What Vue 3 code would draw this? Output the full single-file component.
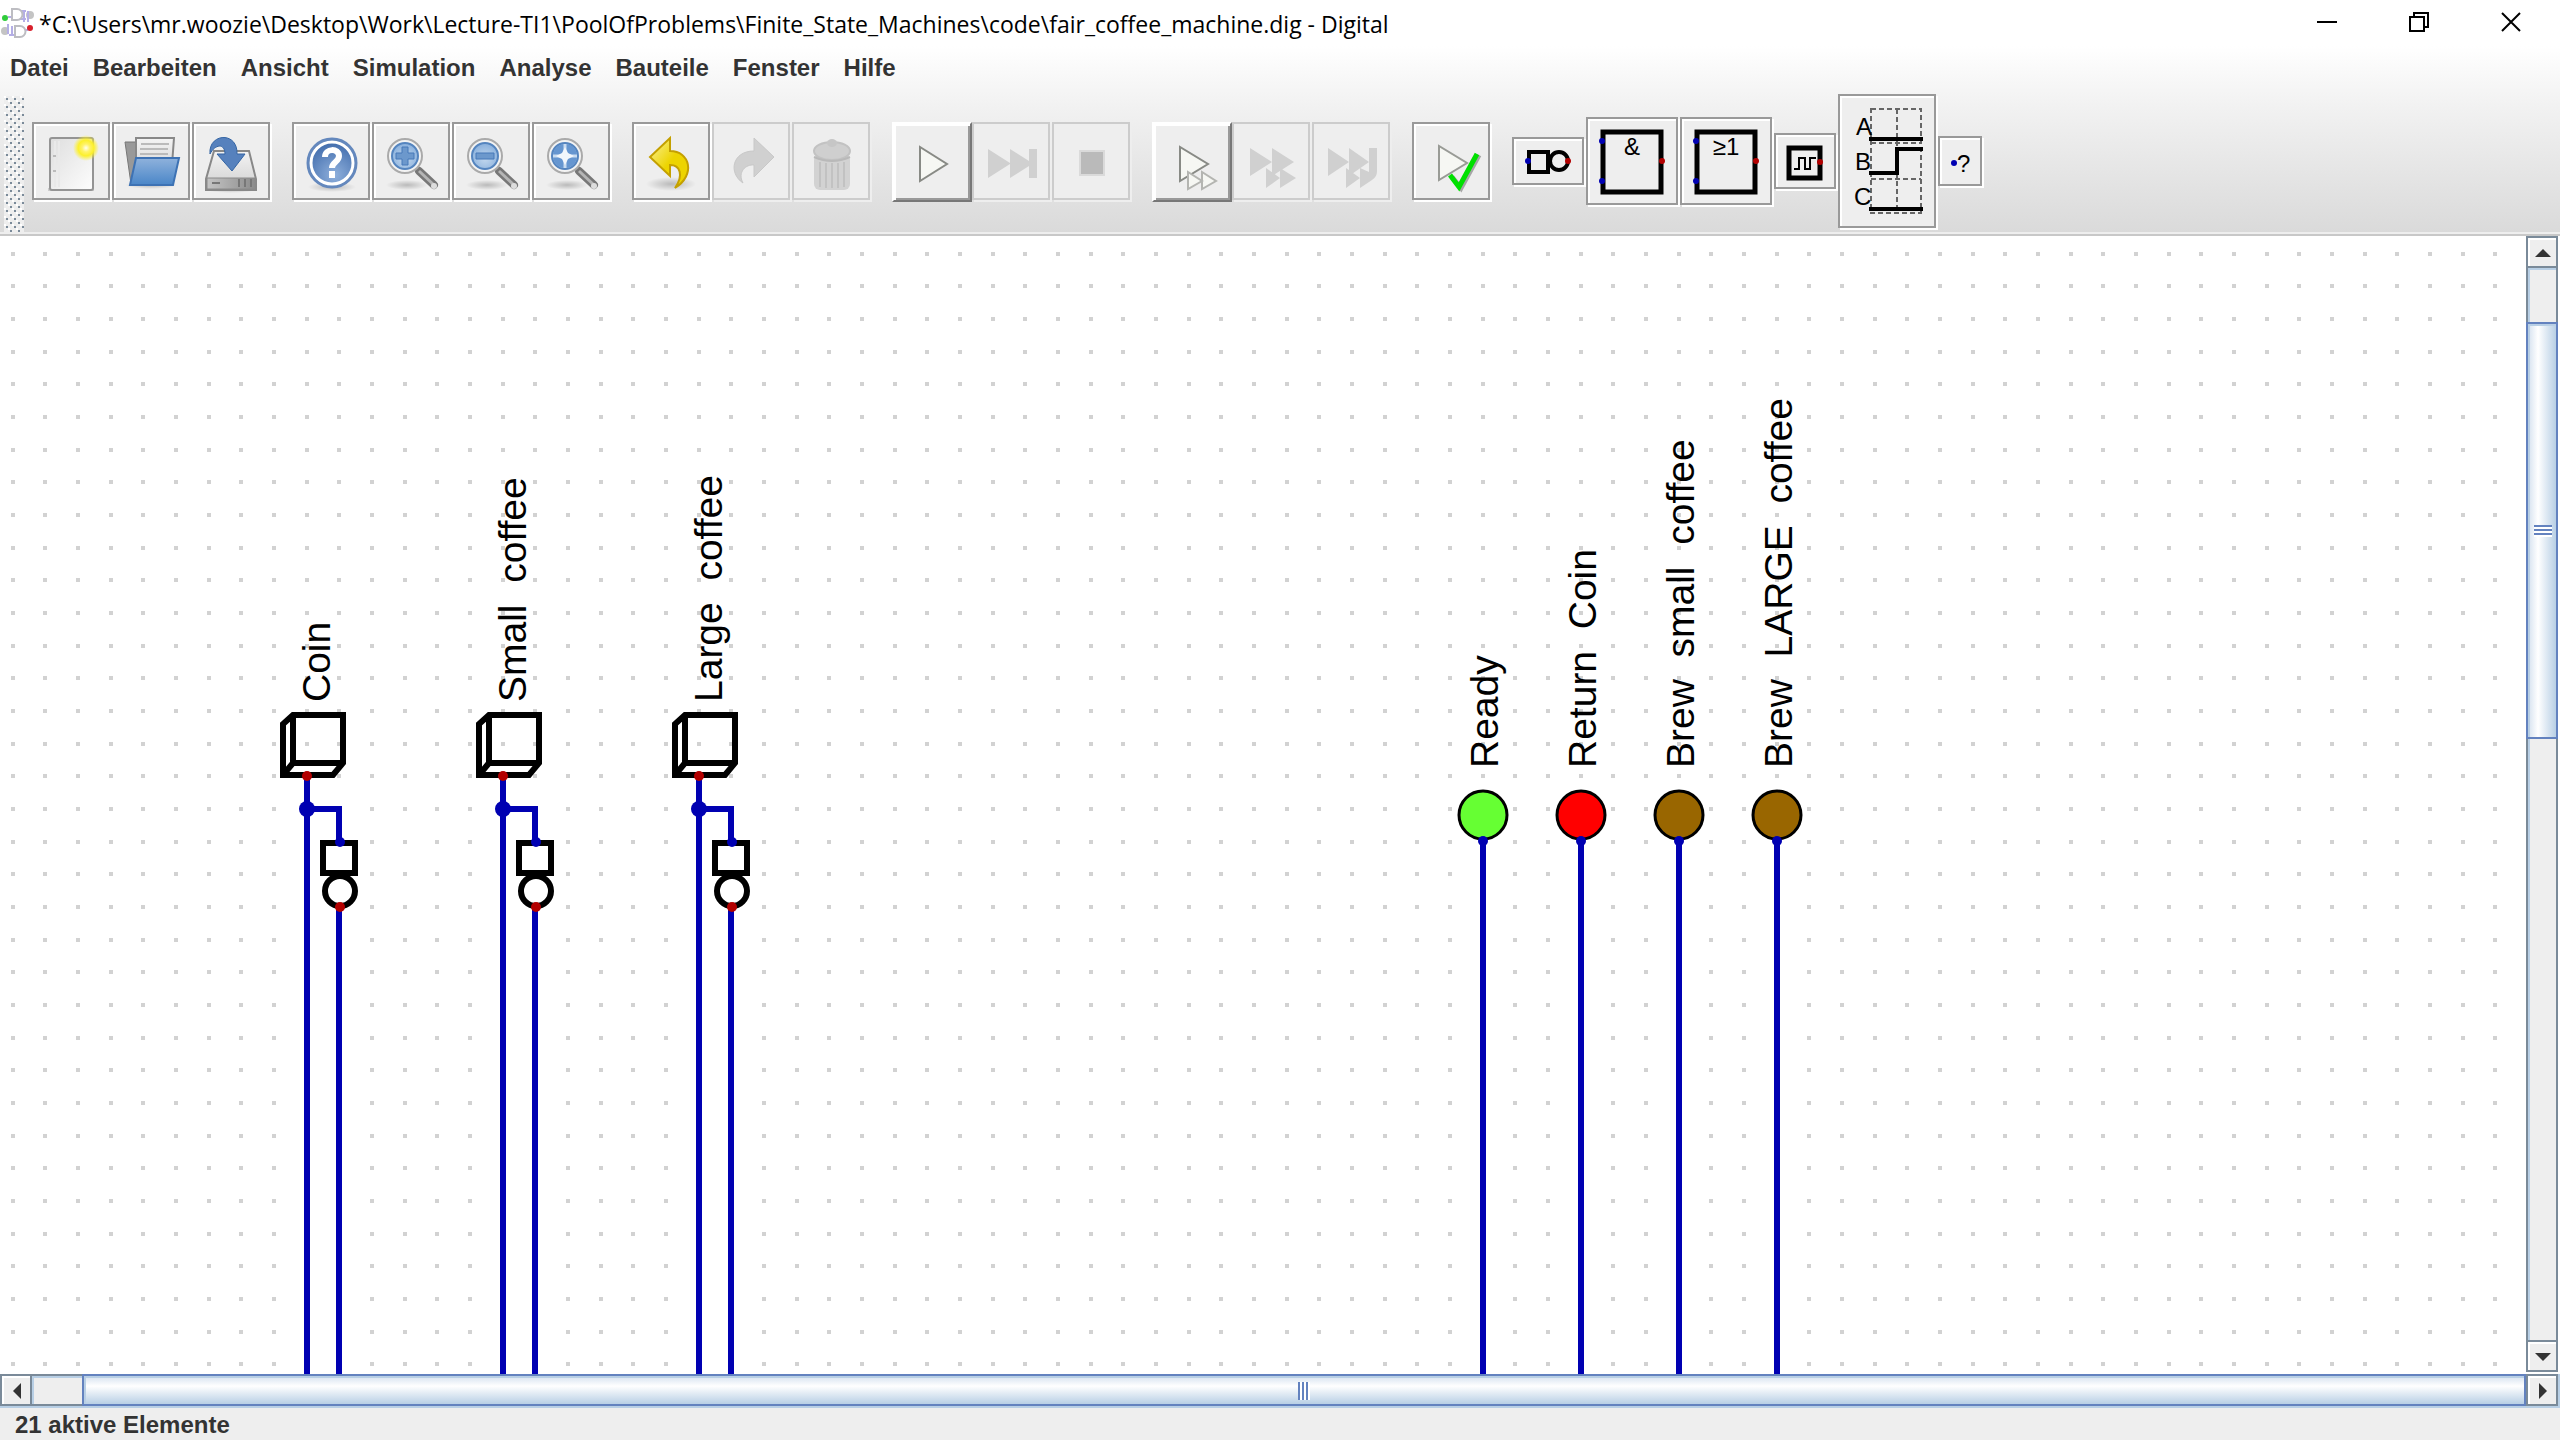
<script setup>
import { ref } from 'vue'

const menus = ['Datei', 'Bearbeiten', 'Ansicht', 'Simulation', 'Analyse', 'Bauteile', 'Fenster', 'Hilfe']

const groups = [
  [
    { id: 'new', label: 'Neu' },
    { id: 'open', label: 'Öffnen' },
    { id: 'save', label: 'Speichern' },
  ],
  [
    { id: 'help', label: 'Hilfe' },
    { id: 'zoomin', label: 'Vergrößern' },
    { id: 'zoomout', label: 'Verkleinern' },
    { id: 'zoomfit', label: 'Einpassen' },
  ],
  [
    { id: 'undo', label: 'Rückgängig' },
    { id: 'redo', label: 'Wiederholen', off: true },
    { id: 'delete', label: 'Löschen', off: true },
  ],
  [
    { id: 'run', label: 'Simulation starten', raised: true },
    { id: 'break', label: 'Bis Break', off: true },
    { id: 'stop', label: 'Stopp', off: true },
  ],
  [
    { id: 'micro', label: 'Gatterschritt', raised: true },
    { id: 'microstep', label: 'Einzelschritt', off: true },
    { id: 'microbreak', label: 'Einzelschritte bis Break', off: true },
  ],
  [{ id: 'test', label: 'Tests ausführen' }],
]

const inputs = ref([
  { x: 307, name: 'Coin' },
  { x: 503, name: 'Small  coffee' },
  { x: 699, name: 'Large  coffee' },
])
const leds = ref([
  { x: 1483, name: 'Ready', color: '#66ff33' },
  { x: 1581, name: 'Return  Coin', color: '#ff0000' },
  { x: 1679, name: 'Brew  small  coffee', color: '#996600' },
  { x: 1777, name: 'Brew  LARGE  coffee', color: '#996600' },
])
</script>

<template>
  <div class="window">
    <div class="chrome">
      <header class="titlebar">
        <svg class="appicon" width="34" height="40" viewBox="0 0 34 40" aria-hidden="true">
          <circle cx="30" cy="13" r="4" fill="#c4c4c4" />
          <circle cx="5" cy="29" r="4" fill="#c4c4c4" />
          <path d="M8 15h4M20 9h6M20 17h6M24 8v12M28 9v11M8 22v10M12 24v9M9 33h6M24 28h4" fill="none" stroke="#b4aee6" stroke-width="2" />
          <g fill="#fff" stroke="#bdbdc2" stroke-width="2">
            <path d="M12 7h5a5 5 0 0 1 0 11h-5zM15 24h5a5 5 0 0 1 0 11h-5z" />
          </g>
          <circle cx="5" cy="16" r="3" fill="#30cc3c" />
          <circle cx="30" cy="26" r="3" fill="#d8202c" />
        </svg>
        <h1 class="title">*C:\Users\mr.woozie\Desktop\Work\Lecture-TI1\PoolOfProblems\Finite_State_Machines\code\fair_coffee_machine.dig - Digital</h1>
        <div class="winbuttons">
          <button type="button" aria-label="Minimieren">
            <svg width="20" height="20"><path d="M0 10h20" stroke="#000" stroke-width="2" /></svg>
          </button>
          <button type="button" aria-label="Wiederherstellen">
            <svg width="20" height="20"><path d="M1 5h14v14H1zM5 5V1h14v14h-4" fill="none" stroke="#000" stroke-width="2" /></svg>
          </button>
          <button type="button" aria-label="Schließen">
            <svg width="20" height="20"><path d="M1 1l18 18M19 1L1 19" stroke="#000" stroke-width="2" /></svg>
          </button>
        </div>
      </header>

      <nav class="menubar">
        <button v-for="m in menus" :key="m" type="button">{{ m }}</button>
      </nav>

      <div class="toolbar" role="toolbar">
        <div class="grip"></div>
        <div v-for="(g, i) in groups" :key="i" class="group">
          <button
            v-for="b in g"
            :key="b.id"
            type="button"
            class="tool"
            :class="{ raised: b.raised }"
            :disabled="b.off"
            :aria-label="b.label"
          >
            <svg width="56" height="56" viewBox="-2 -2 56 56">
              <defs>
                <linearGradient id="folder" x1="0" y1="0" x2="0" y2="1">
                  <stop offset="0" stop-color="#8fb2dc" />
                  <stop offset="1" stop-color="#4a86c8" />
                </linearGradient>
                <linearGradient id="metal" x1="0" y1="0" x2="0" y2="1">
                  <stop offset="0" stop-color="#f4f4f4" />
                  <stop offset="1" stop-color="#cfcfcf" />
                </linearGradient>
                <linearGradient id="drive" x1="0" y1="0" x2="1" y2="0">
                  <stop offset="0" stop-color="#c4c4c4" />
                  <stop offset="1" stop-color="#8c8c8c" />
                </linearGradient>
                <linearGradient id="sheet" x1="0" y1="0" x2="1" y2="1">
                  <stop offset="0" stop-color="#dedede" />
                  <stop offset="1" stop-color="#fdfdfd" />
                </linearGradient>
                <linearGradient id="gold" x1="0" y1="0" x2="1" y2="1">
                  <stop offset="0" stop-color="#fbf2a0" />
                  <stop offset=".5" stop-color="#edd400" />
                  <stop offset="1" stop-color="#edd400" />
                </linearGradient>
                <radialGradient id="sun">
                  <stop offset="0" stop-color="#fffff0" />
                  <stop offset=".3" stop-color="#fff36a" />
                  <stop offset=".6" stop-color="#fcf02c" />
                  <stop offset="1" stop-color="#fcf02c" stop-opacity="0" />
                </radialGradient>
                <radialGradient id="lens" cx=".5" cy=".6" r=".6">
                  <stop offset="0" stop-color="#c3d8ee" />
                  <stop offset="1" stop-color="#88afdc" />
                </radialGradient>
                <radialGradient id="orb" cx=".55" cy=".75" r=".8">
                  <stop offset="0" stop-color="#8fb0dc" />
                  <stop offset="1" stop-color="#3461a4" />
                </radialGradient>
                <radialGradient id="shade">
                  <stop offset="0" stop-color="#000" stop-opacity=".22" />
                  <stop offset="1" stop-color="#000" stop-opacity="0" />
                </radialGradient>
              </defs>
              <g v-if="b.id === 'new'">
                <path d="M3 53h46v3H3z" fill="#ccc" />
                <rect x="5" y="3" width="43" height="52" rx="2" fill="url(#sheet)" stroke="#949494" stroke-width="2" />
                <path d="M10 6v46M14 6v46" stroke="#e9e9e9" stroke-width="2" />
                <path d="M8 21h3M8 36h3" stroke="#bbb" stroke-width="2" />
                <circle cx="41" cy="13" r="13" fill="url(#sun)" />
              </g>
              <g v-else-if="b.id === 'open'">
                <ellipse cx="26" cy="50" rx="26" ry="4" fill="url(#shade)" />
                <path d="M0 7h14v42H6z" fill="#999" stroke="#777" />
                <path d="M11 3h38l-3 40H11z" fill="url(#metal)" stroke="#888" stroke-width="2" />
                <path d="M16 9h28M15 14h28M15 19h28" stroke="#bbb" stroke-width="2" />
                <path d="M11 23h43l-6 27H5z" fill="url(#folder)" stroke="#3d72b4" stroke-width="2" />
              </g>
              <g v-else-if="b.id === 'save'">
                <ellipse cx="26" cy="54" rx="27" ry="4" fill="url(#shade)" />
                <path d="M9 16h35l7 28v11H1V44z" fill="url(#metal)" stroke="#888" stroke-width="2" />
                <path d="M2 43h48v11H2z" fill="url(#drive)" stroke="#8a8a8a" stroke-width="1" />
                <path d="M7 48h8M34 44v8M40 44v8M46 44v8" stroke="#777" stroke-width="2" />
                <path d="M5 19C3-2 33-4 32 19h8L27 36 12 19h8C20 8 10 9 5 19z" fill="#5681bd" stroke="#3465a4" stroke-width="1" />
              </g>
              <g v-else-if="b.id === 'help'">
                <ellipse cx="27" cy="52" rx="24" ry="5" fill="url(#shade)" />
                <circle cx="27" cy="28" r="24" fill="url(#orb)" stroke="#6488bd" stroke-width="3" />
                <circle cx="27" cy="28" r="21" fill="none" stroke="#fff" stroke-width="3" />
                <path d="M20 22c0-9 14-9 14-1 0 6-7 6-7 12" fill="none" stroke="#fff" stroke-width="6" />
                <rect x="24" y="36" width="6" height="7" fill="#fff" />
              </g>
              <g v-else-if="b.id.startsWith('zoom')">
                <ellipse cx="22" cy="50" rx="21" ry="5" fill="url(#shade)" />
                <path d="M34 36l15 14" stroke="#777" stroke-width="8" stroke-linecap="round" />
                <path d="M34 36l15 14" stroke="#b5b5b5" stroke-width="3" />
                <circle cx="49" cy="51" r="3" fill="#ddd" />
                <circle cx="20" cy="21" r="17" fill="#f4f4f4" stroke="#aaa" stroke-width="2" />
                <circle cx="20" cy="21" r="13" fill="url(#lens)" stroke="#5585bf" stroke-width="2" />
                <path v-if="b.id === 'zoomin'" d="M17 12h6v6h6v6h-6v6h-6v-6h-6v-6h6z" fill="#6c98cc" stroke="#4679b8" stroke-width="1" />
                <path v-else-if="b.id === 'zoomout'" d="M11 18h18v6H11z" fill="#6c98cc" stroke="#4679b8" stroke-width="1" />
                <g v-else>
                  <circle cx="20" cy="21" r="12" fill="#6696d0" />
                  <path d="M20 9v24M8 21h24" stroke="#c9dcf0" stroke-width="3" />
                  <path d="M20 12l3 6 6 3-6 3-3 6-3-6-6-3 6-3z" fill="#f2f7fc" />
                </g>
              </g>
              <g v-else-if="b.id === 'undo'">
                <ellipse cx="26" cy="49" rx="25" ry="7" fill="url(#shade)" />
                <path d="M25 3v13c20 0 26 24 5 37 9-13 5-23-5-23v11L5 22z" fill="url(#gold)" stroke="#c4a000" stroke-width="2" />
              </g>
              <g v-else-if="b.id === 'redo'">
                <path d="M29 3v13C7 16 3 38 18 48c-6-11 3-19 11-18v12l20-20z" fill="#d0d0d0" stroke="#c8c8c8" />
              </g>
              <g v-else-if="b.id === 'delete'">
                <rect x="9" y="19" width="36" height="36" rx="6" fill="#d2d2d2" />
                <path d="M15 27v25M21 28v25M27 28v25M33 28v25M39 27v25" stroke="#c2c2c2" stroke-width="2" />
                <ellipse cx="27" cy="16" rx="18" ry="9" fill="#cfcfcf" stroke="#c2c2c2" stroke-width="2" />
                <ellipse cx="27" cy="8" rx="5" ry="4" fill="#c6c6c6" />
                <path d="M9 22q18 8 36 0" fill="none" stroke="#b9b9b9" stroke-width="2" />
              </g>
              <path v-else-if="b.id === 'run'" d="M14 11v34l27-17z" fill="#f6f7f3" stroke="#888a85" stroke-width="2" />
              <path v-else-if="b.id === 'break'" d="M3 14l22 14V14l19 12V14h8v29h-8V31L25 43V29L3 43z" fill="#d0d0d0" />
              <rect v-else-if="b.id === 'stop'" x="15" y="16" width="24" height="24" fill="#bababa" stroke="#dadada" stroke-width="2" />
              <g v-else-if="b.id === 'micro'" fill="#f6f7f3" stroke="#888a85" stroke-width="2">
                <path d="M14 11v34l28-17z" />
                <path d="M22 36v17l14-8zM36 36v17l14-8z" stroke="#b4b5b1" />
              </g>
              <path v-else-if="b.id === 'microstep'" d="M5 13v28l22-14v14l22-14-22-14v14zM21 33v20l14-10v10l16-10-16-10v10z" fill="#d0d0d0" />
              <path v-else-if="b.id === 'microbreak'" d="M3 13v28l21-14v14l20-14-20-14v14zM21 33v20l14-10v10l12-8q5-3 5-9V13h-8v24l-9-4v10z" fill="#d0d0d0" />
              <g v-else-if="b.id === 'test'">
                <path d="M14 11v34l28-17z" fill="#f6f7f3" stroke="#999b96" stroke-width="2" />
                <path d="M27 42l9 11 18-33" fill="none" stroke="#777" stroke-width="5" opacity=".6" />
                <path d="M25 40l9 12 18-33" fill="none" stroke="#00e000" stroke-width="5" />
              </g>
            </svg>
          </button>
        </div>

        <div class="group">
          <button type="button" class="tool part" aria-label="Nicht">
            <svg width="56" height="32">
              <g fill="none" stroke="#000" stroke-width="4">
                <path d="M9 7h19v20H9z" /><circle cx="39" cy="16" r="9" />
              </g>
              <circle cx="8" cy="16" r="3" fill="#0000b2" /><circle cx="48" cy="16" r="3" fill="#b20000" />
            </svg>
          </button>
          <button v-for="s in ['&', '≥1']" :key="s" type="button" class="tool part">
            <svg width="76" height="72">
              <path d="M9 7h58v60H9z" fill="none" stroke="#000" stroke-width="5" />
              <text x="38" y="30" text-anchor="middle" class="sign">{{ s }}</text>
              <circle cx="8" cy="16" r="3" fill="#0000b2" /><circle cx="8" cy="56" r="3" fill="#0000b2" />
              <circle cx="68" cy="36" r="3" fill="#b20000" />
            </svg>
          </button>
          <button type="button" class="tool part" aria-label="Takteingang">
            <svg width="46" height="40">
              <path d="M7 7h31v30H7z" fill="none" stroke="#000" stroke-width="5" />
              <path d="M12 28h5V17h6v11h5V17h6" fill="none" stroke="#000" stroke-width="2" />
              <circle cx="38" cy="21" r="3" fill="#b20000" />
            </svg>
          </button>
          <button type="button" class="tool part" aria-label="Messwertgraph">
            <svg width="82" height="118">
              <path d="M25 7h50v104H25zM51 7v104M25 41h50M25 77h50" fill="none" stroke="#666" stroke-width="2" stroke-dasharray="5 3" />
              <g class="sign"><text x="10" y="33">A</text><text x="9" y="68">B</text><text x="8" y="103">C</text></g>
              <path d="M23 37h54M23 71h28V47h26M23 107h54" fill="none" stroke="#000" stroke-width="4" />
            </svg>
          </button>
          <button type="button" class="tool part">
            <svg width="28" height="34">
              <circle cx="8" cy="19" r="3" fill="#0000b2" />
              <text x="11" y="28" class="sign">?</text>
            </svg>
          </button>
        </div>
      </div>
    </div>

    <main class="work">
      <svg class="canvas" width="100%" height="100%">
        <defs>
          <pattern id="dots" width="98" height="98" patternUnits="userSpaceOnUse">
            <g fill="#d2d2d2">
              <template v-for="y in [18, 50, 83]" :key="y">
                <rect v-for="x in [13, 45, 78]" :key="x" :x="x - 2" :y="y - 2" width="4" height="4" />
              </template>
            </g>
          </pattern>
        </defs>
        <rect width="100%" height="100%" fill="url(#dots)" />
        <g v-for="p in inputs" :key="p.name" :transform="`translate(${p.x} 540)`">
          <text class="label" transform="translate(23 -74) rotate(-90)">{{ p.name }}</text>
          <g fill="none" stroke="#0000b2" stroke-width="6">
            <path d="M0 0V3000M0 33H32V66M32 131V3000" />
          </g>
          <g fill="none" stroke="#000" stroke-width="6">
            <path d="M-24 -1V-52L-14 -61H36V-13L26 -1ZM-14 -61V-13H36M-14 -13L-24 -1" />
            <path d="M16 67H48V97H16Z" />
            <circle cx="33" cy="115" r="15" />
          </g>
          <circle cx="0" cy="33" r="8" fill="#0000b2" />
          <circle cx="33" cy="66" r="5" fill="#0000b2" />
          <circle cx="0" cy="0" r="5" fill="#b20000" />
          <circle cx="33" cy="131" r="5" fill="#b20000" />
        </g>
        <g v-for="p in leds" :key="p.name" :transform="`translate(${p.x} 579)`">
          <text class="label" transform="translate(15 -47) rotate(-90)">{{ p.name }}</text>
          <circle r="24" :fill="p.color" stroke="#000" stroke-width="3" />
          <path d="M0 26V3000" stroke="#0000b2" stroke-width="6" />
          <circle cy="26" r="5" fill="#0000b2" />
        </g>
      </svg>
      <div class="bar vertical">
        <button type="button" aria-label="Nach oben"><svg width="16" height="8"><path d="M8 0l8 8H0z" /></svg></button>
        <div class="track"><div class="thumb"><i></i></div></div>
        <button type="button" aria-label="Nach unten"><svg width="16" height="8"><path d="M0 0h16L8 8z" /></svg></button>
      </div>
    </main>

    <div class="bar horizontal">
      <button type="button" aria-label="Nach links"><svg width="8" height="16"><path d="M8 0v16L0 8z" /></svg></button>
      <div class="track"><div class="thumb"><i></i></div></div>
      <button type="button" aria-label="Nach rechts"><svg width="8" height="16"><path d="M0 0l8 8-8 8z" /></svg></button>
    </div>
    <footer class="status">21 aktive Elemente</footer>
  </div>
</template>

<style>
body {
  margin: 0;
}
</style>

<style scoped>
.window {
  display: flex;
  flex-direction: column;
  height: 100vh;
  overflow: hidden;
  background: #eee;
  color: #333;
  font-family: "Liberation Sans", Arial, sans-serif;
}
button {
  margin: 0;
  padding: 0;
  border: 0;
  background: none;
  color: inherit;
  font: inherit;
}
svg {
  display: block;
}
.chrome {
  flex: none;
  background: linear-gradient(#fff 46px, #f2f2f2 104px, #dadada 232px);
  border-bottom: 2px solid #c8c8c8;
}
.titlebar {
  display: flex;
  align-items: center;
  height: 44px;
  padding-right: 39px;
}
.appicon {
  flex: none;
}
.title {
  flex: 1;
  margin: 0;
  padding: 4px 0 0 5px;
  color: #000;
  font: 400 23px/32px "Open Sans", "Noto Sans", sans-serif;
  white-space: nowrap;
}
.winbuttons {
  display: flex;
  gap: 72px;
}
.menubar {
  display: flex;
  gap: 24px;
  height: 48px;
  padding-left: 10px;
  font-size: 24px;
  font-weight: bold;
}
.toolbar {
  display: flex;
  align-items: center;
  gap: 20px;
  height: 140px;
  border-bottom: 2px solid #eee;
}
.grip {
  width: 20px;
  height: 136px;
  margin: 4px -12px 0 4px;
  background:
    conic-gradient(from 0deg at 2px 2px, transparent 75%, #fff 0) 0 0 / 8px 8px,
    conic-gradient(from 0deg at 2px 2px, transparent 75%, #fff 0) 4px 4px / 8px 8px,
    conic-gradient(from 0deg at 2px 2px, transparent 75%, #7a8a99 0) 2px 2px / 8px 8px,
    conic-gradient(from 0deg at 2px 2px, transparent 75%, #7a8a99 0) 6px 6px / 8px 8px,
    #eee;
}
.group {
  display: flex;
  align-items: center;
}
.tool {
  display: grid;
  place-items: center;
  box-sizing: border-box;
  width: 78px;
  height: 78px;
  margin: 0 2px 2px 0;
  border: 2px solid #999;
  background: #eee;
  box-shadow: inset 2px 2px #fff, 2px 2px #fff;
}
.tool svg {
  overflow: visible;
}
.tool:disabled {
  border-color: #ccc;
  box-shadow: 2px 2px #eee;
}
.tool.raised {
  width: 80px;
  height: 80px;
  margin: 0;
  border-color: #fff #777 #777 #fff;
  box-shadow: inset 2px 2px #fff, inset -2px -2px #999;
}
.tool.part {
  width: auto;
  height: auto;
  padding: 6px;
}
.sign {
  fill: #000;
  font-size: 24px;
}
.label {
  fill: #000;
  font-size: 39px;
  white-space: pre;
}
.work {
  display: flex;
  flex: 1;
  min-height: 0;
  background: #fff;
}
.canvas {
  flex: 1;
  min-width: 0;
}
.bar {
  display: flex;
  flex: none;
  box-sizing: border-box;
}
.bar button {
  display: grid;
  place-items: center;
  flex: none;
  box-sizing: border-box;
  width: 32px;
  height: 32px;
  padding: 2px 0 0 2px;
  border: 2px solid #7a8a99;
  box-shadow: inset 2px 2px #fff;
  background: #eee;
}
.bar path {
  fill: #333;
}
.track {
  display: flex;
  flex: 1;
  box-sizing: border-box;
  background: #eee;
}
.thumb {
  display: grid;
  place-items: center;
  box-sizing: border-box;
  border: 2px solid #6382bf;
}
.vertical {
  flex-direction: column;
  width: 34px;
  padding: 0 2px 2px 0;
}
.vertical .track {
  flex-direction: column;
  padding-top: 54px;
  border: solid #7a8a99;
  border-width: 0 2px;
  box-shadow: inset 2px 2px #b8cfe5;
}
.vertical .thumb {
  height: 41%;
  margin: 0 -2px;
  background: linear-gradient(90deg, #d5e1ef, #fff 36%, #b8cfe5);
  box-shadow: inset 2px 2px #b8cfe5;
}
.vertical i {
  width: 18px;
  height: 12px;
  margin-left: 2px;
  background: repeating-linear-gradient(#6382bf 0 2px, #fff 2px 4px);
}
.horizontal {
  height: 34px;
  padding: 0 2px 2px 0;
  background: #b8cfe5;
}
.horizontal .track {
  padding-left: 50px;
  border: solid #7a8a99;
  border-width: 2px 0;
  box-shadow: inset 2px 2px #b8cfe5;
}
.horizontal .thumb {
  flex: 1;
  margin: -2px 0;
  background: linear-gradient(#d5e1ef, #fff 36%, #b8cfe5);
  box-shadow: inset 2px 2px #b8cfe5;
}
.horizontal i {
  width: 12px;
  height: 18px;
  margin-top: 2px;
  background: repeating-linear-gradient(90deg, #6382bf 0 2px, #fff 2px 4px);
}
.status {
  flex: none;
  height: 32px;
  padding-left: 15px;
  font-size: 24px;
  font-weight: bold;
  line-height: 34px;
}
</style>
